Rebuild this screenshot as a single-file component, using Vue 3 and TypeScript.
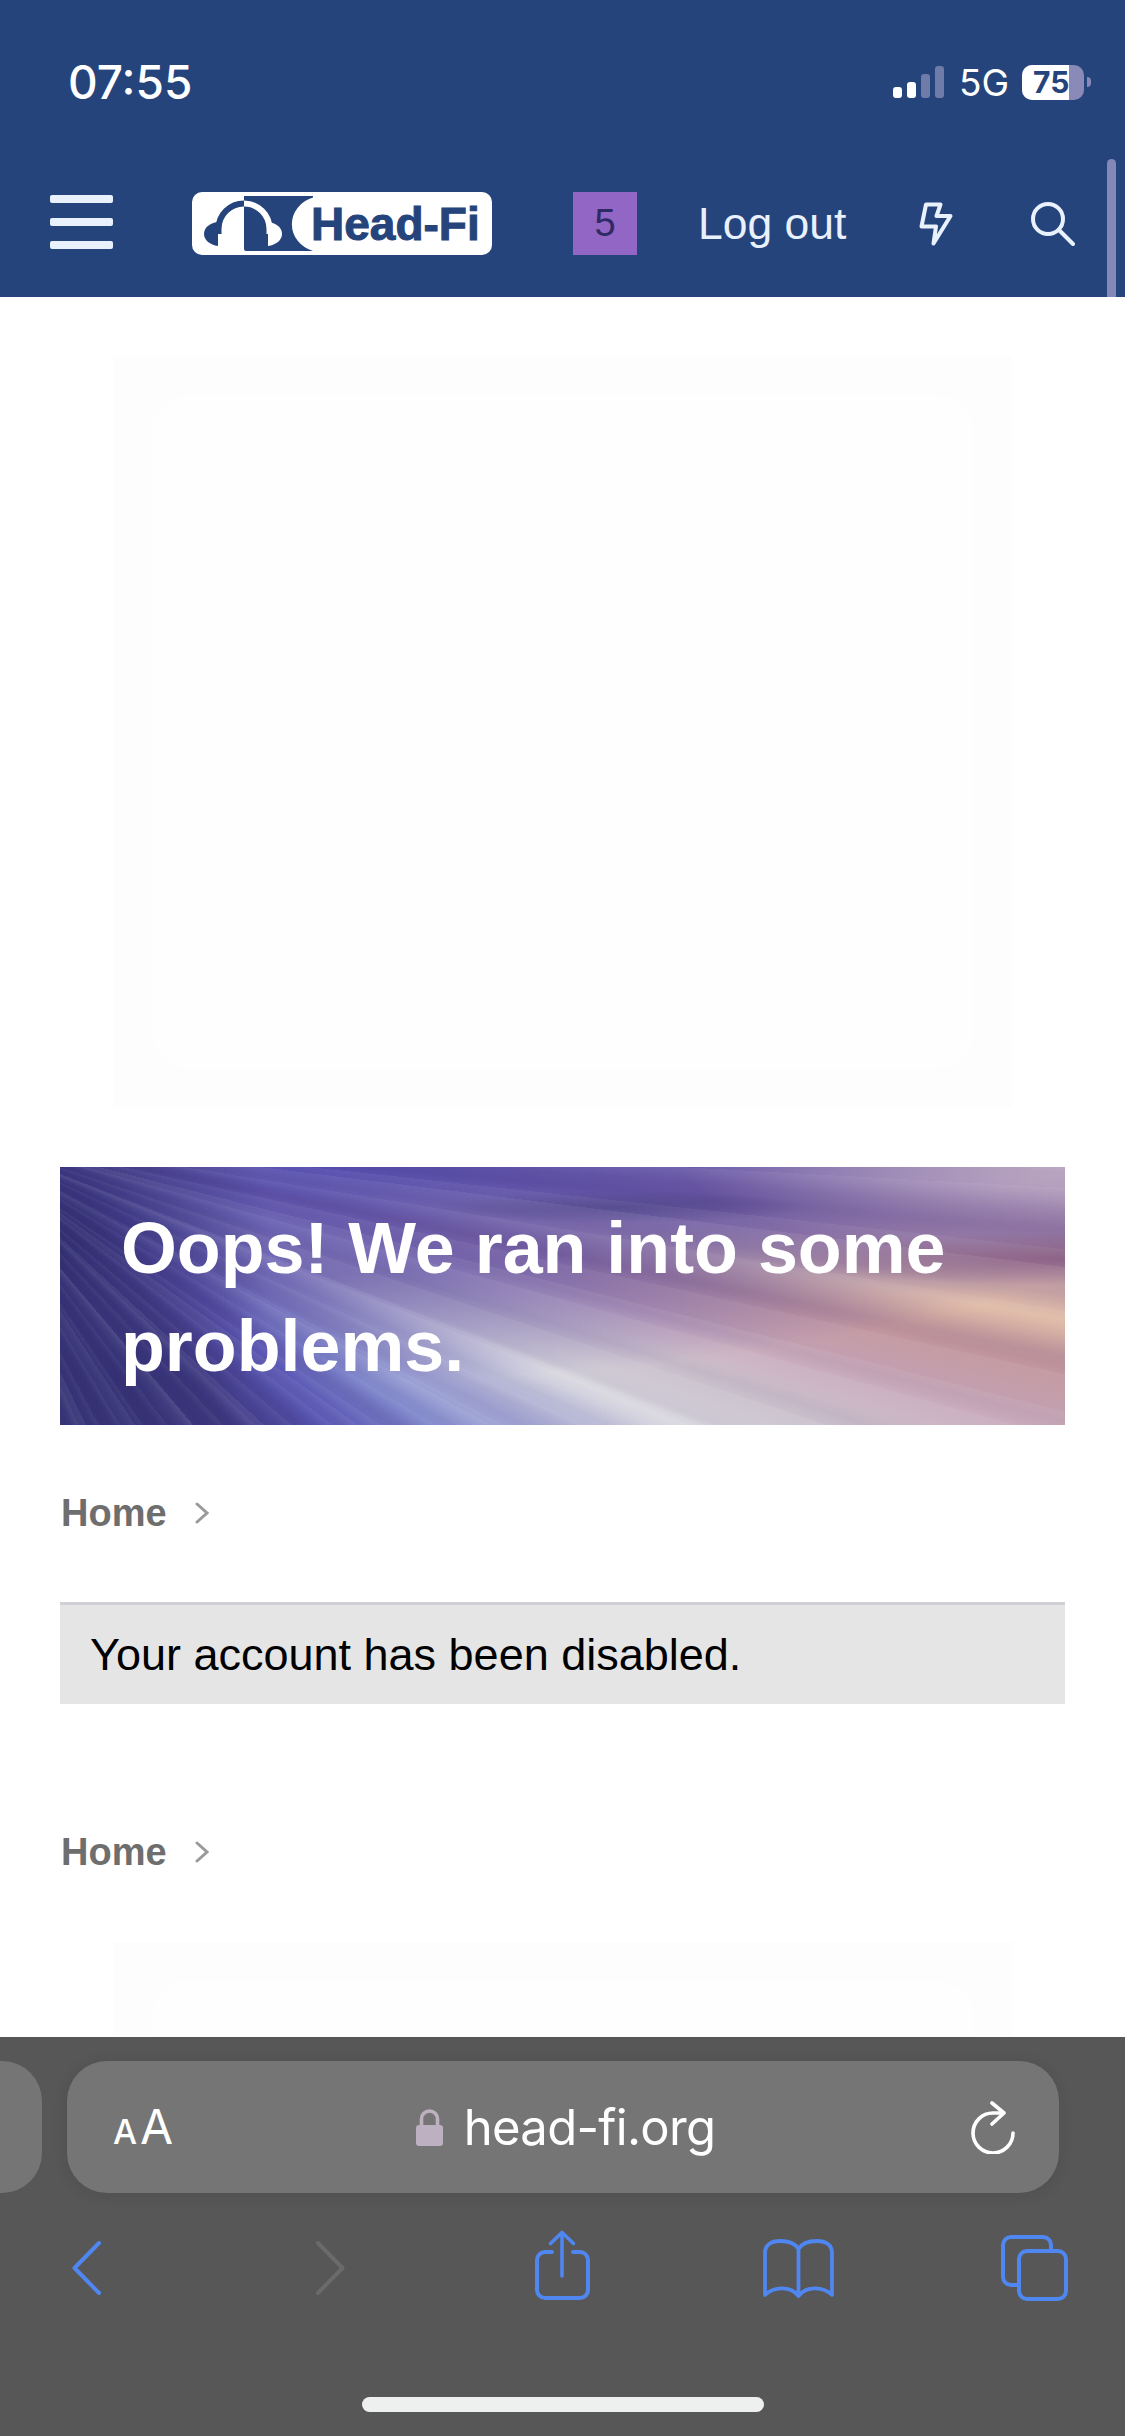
<script setup lang="ts">
const signalBars = [
  { height: 11, dim: false },
  { height: 16, dim: false },
  { height: 24, dim: true },
  { height: 32, dim: true }
]
</script>

<template>
  <div class="page">
    <header class="site-header">
      <div class="status-bar">
        <span class="time">07:55</span>
        <div class="status-right">
          <div class="signal">
            <span
              v-for="(bar, i) in signalBars"
              :key="i"
              class="signal-bar"
              :class="{ dim: bar.dim }"
              :style="{ height: bar.height + 'px' }"
            ></span>
          </div>
          <span class="network">5G</span>
          <div class="battery">
            <div class="battery-fill"></div>
            <span class="battery-level">75</span>
          </div>
          <span class="battery-nub"></span>
        </div>
      </div>

      <nav class="nav">
        <div class="burger">
          <span></span>
          <span></span>
          <span></span>
        </div>
        <div class="logo">
          <svg class="logo-mark" width="121" height="63" viewBox="0 0 121 63">
            <path d="M52 4H121V5.500A30 28 0 0 0 121 59H54Q52 59 52 57Z" fill="#25447c" />
            <path d="M26.500 42V37A25.500 25.500 0 0 1 52 11.500" fill="none" stroke="#25447c" stroke-width="6" />
            <path d="M26 30C17 31 12 36 12 42C12 48 18 53 26 54Z" fill="#25447c" />
            <path d="M52 11.500A25.500 25.500 0 0 1 77.500 37V42" fill="none" stroke="#fff" stroke-width="6" />
            <path d="M76 30C85 31 90 36 90 42C90 48 84 53 76 54Z" fill="#fff" />
          </svg>
          <span class="logo-text">Head-Fi</span>
        </div>
        <span class="alert-badge">5</span>
        <span class="logout">Log out</span>
        <svg class="bolt" width="34" height="44" viewBox="0 0 34 44">
          <path
            d="M7 2.500H21.500L17.500 14H31.500L14.500 41.500L17 24.500H2.500Z"
            fill="none"
            stroke="#e8f1fc"
            stroke-width="4"
            stroke-linejoin="round"
          />
        </svg>
        <svg class="search" width="44" height="44" viewBox="0 0 44 44">
          <circle cx="17" cy="17" r="15" fill="none" stroke="#e8f1fc" stroke-width="4" />
          <path d="M28 28L42 42" stroke="#e8f1fc" stroke-width="4" stroke-linecap="round" />
        </svg>
      </nav>
      <span class="scroll-thumb"></span>
    </header>

    <main class="content">
      <div class="ad-slot">
        <div class="ad-inner"></div>
      </div>

      <div class="banner">
        <h1>Oops! We ran into some problems.</h1>
      </div>

      <div class="crumb crumb-top">
        <span>Home</span>
        <svg width="14" height="22" viewBox="0 0 14 22">
          <path d="M2 2L12 11L2 20" fill="none" stroke="#9a9a9a" stroke-width="3" stroke-linecap="round" />
        </svg>
      </div>

      <div class="notice">Your account has been disabled.</div>

      <div class="crumb crumb-bottom">
        <span>Home</span>
        <svg width="14" height="22" viewBox="0 0 14 22">
          <path d="M2 2L12 11L2 20" fill="none" stroke="#9a9a9a" stroke-width="3" stroke-linecap="round" />
        </svg>
      </div>

      <div class="ad-slot ad-slot-bottom">
        <div class="ad-inner"></div>
      </div>
    </main>

    <footer class="browser">
      <div class="tabs-row">
        <div class="prev-pill"></div>
        <div class="url-pill">
          <div class="reader"><span class="small-a">A</span><span class="big-a">A</span></div>
          <div class="address">
            <svg width="27" height="38" viewBox="0 0 27 38">
              <path d="M5.500 19V11A8 8 0 0 1 21.500 11V19" fill="none" stroke="#bdb0c0" stroke-width="3.600" />
              <rect x="0" y="17" width="27" height="21" rx="3" fill="#bdb0c0" />
            </svg>
            <span>head-fi.org</span>
          </div>
          <svg class="reload" width="44" height="53" viewBox="0 0 44 53">
            <path
              d="M42 32A20 20 0 1 1 22 12H32"
              fill="none"
              stroke="#fff"
              stroke-width="3.600"
              stroke-linecap="round"
            />
            <path
              d="M21 2L33 12L21 23"
              fill="none"
              stroke="#fff"
              stroke-width="3.600"
              stroke-linecap="round"
              stroke-linejoin="round"
            />
          </svg>
        </div>
      </div>

      <div class="toolbar">
        <svg class="tool-back" width="31" height="74" viewBox="0 0 31 74">
          <path d="M28 13L3.500 38L28 63" fill="none" stroke="#4f86f0" stroke-width="4" stroke-linecap="round" stroke-linejoin="round" />
        </svg>
        <svg class="tool-forward" width="31" height="74" viewBox="0 0 31 74">
          <path d="M3 13L27.500 38L3 63" fill="none" stroke="#6a6a6a" stroke-width="4" stroke-linecap="round" stroke-linejoin="round" />
        </svg>
        <svg class="tool-share" width="55" height="74" viewBox="0 0 55 74">
          <path d="M17 22H10A8 8 0 0 0 2 30V60A8 8 0 0 0 10 68H45A8 8 0 0 0 53 60V30A8 8 0 0 0 45 22H38" fill="none" stroke="#4f86f0" stroke-width="4" stroke-linecap="round" />
          <path d="M27 46V3M15.500 13.500L27 2.500L38.500 13.500" fill="none" stroke="#4f86f0" stroke-width="3.600" stroke-linecap="round" stroke-linejoin="round" />
        </svg>
        <svg class="tool-book" width="71" height="74" viewBox="0 0 71 74">
          <path
            d="M35.500 19C32 13 24 11 17 11C8 11 2 15 2 23V65C10 57 27 55 35.500 66C44 55 61 57 69 65V23C69 15 63 11 54 11C47 11 39 13 35.500 19V66"
            fill="none"
            stroke="#4f86f0"
            stroke-width="3.800"
            stroke-linejoin="round"
          />
        </svg>
        <svg class="tool-tabs" width="67" height="74" viewBox="0 0 67 74">
          <path d="M17 55H10A8 8 0 0 1 2 47V15A8 8 0 0 1 10 7H42A8 8 0 0 1 50 15V20" fill="none" stroke="#4f86f0" stroke-width="4" />
          <rect x="18" y="21" width="47" height="48" rx="8" fill="none" stroke="#4f86f0" stroke-width="4" />
        </svg>
      </div>

      <div class="home-indicator"></div>
    </footer>
  </div>
</template>

<style scoped>
.page {
  width: 1125px;
  height: 2436px;
  display: flex;
  flex-direction: column;
  overflow: hidden;
  background: #fff;
  font-family: 'Liberation Sans', Arial, sans-serif;
}

.site-header {
  position: relative;
  height: 297px;
  flex-shrink: 0;
  background: #25447c;
}

.status-bar {
  height: 164px;
  margin-bottom: 28px;
  padding-left: 68px;
  display: flex;
  align-items: center;
  justify-content: space-between;
  font-family: Inter, 'Liberation Sans', sans-serif;
  color: #fff;
}

.time {
  font-size: 46px;
  font-weight: 500;
  line-height: 1;
}

.status-right {
  display: flex;
  align-items: center;
  margin-right: 34px;
}

.signal {
  display: flex;
  align-items: flex-end;
  gap: 5px;
  height: 32px;
}

.signal-bar {
  width: 9px;
  border-radius: 3px;
  background: #fff;
}

.signal-bar.dim {
  background: #6f7ba8;
}

.network {
  margin-left: 15px;
  font-size: 37px;
  font-weight: 400;
  line-height: 1;
}

.battery {
  position: relative;
  width: 62px;
  height: 35px;
  margin-left: 13px;
  border-radius: 10px;
  overflow: hidden;
  background: #8a8ab8;
}

.battery-fill {
  width: 47px;
  height: 100%;
  background: #fff;
}

.battery-level {
  position: absolute;
  left: 11px;
  top: 0;
  font-size: 30px;
  font-weight: 700;
  line-height: 35px;
  color: #25447c;
}

.battery-nub {
  width: 4px;
  height: 10px;
  margin-left: 3px;
  border-radius: 0 4px 4px 0;
  background: #8a8ab8;
}

.nav {
  height: 63px;
  padding-left: 50px;
  display: flex;
  align-items: center;
}

.burger {
  width: 63px;
  display: flex;
  flex-direction: column;
  gap: 15px;
  margin-top: -3px;
}

.burger span {
  height: 8px;
  border-radius: 2px;
  background: #e8f1fc;
}

.logo {
  width: 300px;
  height: 63px;
  margin-left: 79px;
  display: flex;
  align-items: center;
  border-radius: 10px;
  background: #fff;
}

.logo-mark {
  flex-shrink: 0;
}

.logo-text {
  margin-left: -2px;
  font-size: 46px;
  font-weight: 700;
  line-height: 1;
  -webkit-text-stroke: 1px #25447c;
  color: #25447c;
}

.alert-badge {
  width: 64px;
  height: 63px;
  margin-left: 81px;
  display: flex;
  align-items: center;
  justify-content: center;
  background: #9266c4;
  color: #2f2a66;
  font-size: 38px;
}

.logout {
  margin-left: 61px;
  font-size: 44.500px;
  color: #e8f1fc;
}

.bolt {
  margin-left: 73px;
}

.search {
  margin-left: 78px;
}

.scroll-thumb {
  position: absolute;
  right: 9px;
  top: 159px;
  bottom: 0;
  width: 9px;
  border-radius: 5px 5px 0 0;
  background: #8488b8;
}

.content {
  flex: 1;
  min-height: 0;
  overflow: hidden;
}

.ad-slot {
  width: 899px;
  height: 750px;
  margin: 60px 0 0 113px;
  padding: 38px;
  box-sizing: border-box;
  background: #fdfdfd;
}

.ad-slot-bottom {
  margin-top: 60px;
}

.ad-inner {
  height: 100%;
  border-radius: 40px;
  background: #fefefe;
}

.banner {
  width: 1005px;
  height: 258px;
  margin: 60px 0 0 60px;
  padding: 32px 61px 0;
  box-sizing: border-box;
  background:
    repeating-conic-gradient(from 90deg at -120px -40px, rgba(255, 255, 255, 0.05) 0deg, transparent 1.100deg, rgba(40, 20, 90, 0.05) 2.300deg, transparent 3.100deg),
    repeating-conic-gradient(from 90deg at -120px -40px, rgba(255, 255, 255, 0.07) 0deg, transparent 2.900deg, rgba(60, 30, 90, 0.07) 4.300deg, transparent 7.100deg),
    radial-gradient(ellipse 210px 300px at 0 30%, rgba(48, 46, 112, 0.95) 0, rgba(48, 46, 112, 0) 100%),
    radial-gradient(ellipse 190px 16px at 560px 40px, rgba(62, 58, 120, 0.55) 0, rgba(60, 58, 120, 0) 100%),
    radial-gradient(ellipse 280px 26px at 100% 92px, rgba(130, 85, 125, 0.75) 0, rgba(130, 85, 125, 0) 100%),
    radial-gradient(ellipse 380px 90px at 100% 0, rgba(200, 180, 200, 0.85) 0, rgba(170, 140, 180, 0) 100%),
    radial-gradient(ellipse 880px 215px at 24% 0, rgba(84, 78, 176, 0.98) 0, rgba(92, 80, 168, 0.72) 50%, rgba(110, 85, 160, 0) 100%),
    conic-gradient(from 90deg at -30px -30px, #b9a6bf 0deg, #a58db5 2deg, #8a6a9c 5deg, #c09aa0 8deg, #e0bba8 10deg, #c89ba0 12.500deg, #c6a6b8 16deg, #d4cdd6 20deg, #d8d6de 24deg, #a8acd8 30deg, #8088cc 36deg, #5a58b6 43deg, #3d3880 55deg, #38367a 70deg, #3c3c7e 90deg, #3c3c7e 360deg);
}

.banner h1 {
  margin: 0;
  font-size: 71.800px;
  font-weight: 700;
  line-height: 98px;
  color: #fff;
}

.crumb {
  height: 60px;
  margin-left: 61px;
  display: flex;
  align-items: center;
  gap: 28px;
  font-size: 38px;
  font-weight: 700;
  color: #6e6e6e;
}

.crumb-top {
  margin-top: 58px;
}

.crumb-bottom {
  margin-top: 118px;
}

.notice {
  width: 1005px;
  height: 102px;
  margin: 59px 0 0 60px;
  padding-left: 30px;
  box-sizing: border-box;
  display: flex;
  align-items: center;
  border-top: 3px solid #d0d0d5;
  background: #e5e5e6;
  font-size: 45px;
  color: #000;
}

.browser {
  height: 399px;
  flex-shrink: 0;
  display: flex;
  flex-direction: column;
  background: #575757;
  font-family: Inter, 'Liberation Sans', sans-serif;
  color: #fff;
}

.tabs-row {
  margin-top: 24px;
  height: 132px;
  display: flex;
  gap: 25px;
}

.prev-pill {
  width: 42px;
  border-radius: 0 40px 40px 0;
  background: #757575;
}

.url-pill {
  width: 992px;
  padding: 0 44px 0 46px;
  box-sizing: border-box;
  display: grid;
  grid-template-columns: 1fr auto 1fr;
  align-items: center;
  border-radius: 40px;
  background: #757575;
  box-shadow: 0 2px 16px rgba(0, 0, 0, 0.09);
}

.reader {
  display: flex;
  align-items: baseline;
  gap: 3px;
  line-height: 1;
}

.small-a {
  font-size: 34px;
  font-weight: 500;
}

.big-a {
  font-size: 48px;
}

.address {
  display: flex;
  align-items: center;
  gap: 21px;
  font-size: 49px;
  letter-spacing: -0.7px;
  line-height: 1;
  margin-left: 3px;
}

.reload {
  justify-self: end;
}

.toolbar {
  padding: 37px 0 0 71px;
  display: flex;
  align-items: flex-start;
}

.tool-forward {
  margin-left: 213px;
}

.tool-share {
  margin-left: 189px;
}

.tool-book {
  margin-left: 173px;
}

.tool-tabs {
  margin-left: 167px;
}

.home-indicator {
  width: 402px;
  height: 15px;
  margin: 93px auto 0;
  border-radius: 8px;
  background: #eef0f0;
}
</style>

<style>
body {
  margin: 0;
}
</style>
